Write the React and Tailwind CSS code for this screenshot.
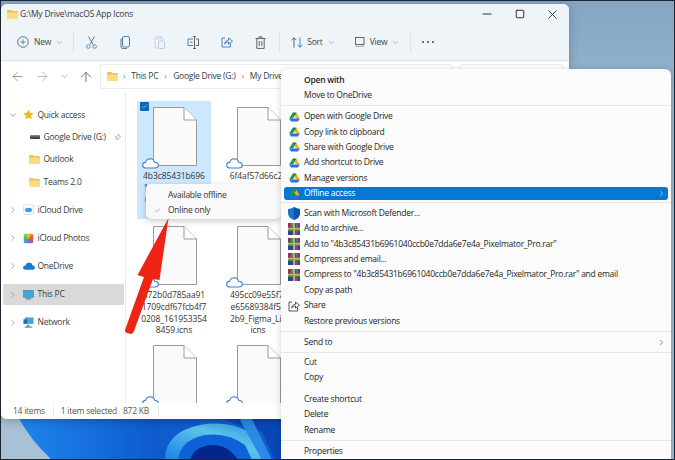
import { ArrowLeft, ArrowRight, ArrowUp, ChevronDown, ChevronRight, Check, Pin, Minus, Square, X } from "lucide-react";

const font = "font-['Open_Sans','Liberation_Sans',sans-serif]";

function Folder({ className = "w-[11px] h-[9px]" }) {
  return (
    <svg viewBox="0 0 22 18" className={className}>
      <path d="M0 2 Q0 0 2 0 H8 L10 2 H20 Q22 2 22 4 V16 Q22 18 20 18 H2 Q0 18 0 16 Z" fill="#f0c14f" />
      <path d="M0 5 H22 V16 Q22 18 20 18 H2 Q0 18 0 16 Z" fill="#fcdc7e" />
    </svg>
  );
}

function Drive() {
  return (
    <svg viewBox="0 0 24 21" className="w-[11px] h-[10px]">
      <path d="M8 1 H16 L8.5 14 H0.5 Z" fill="#0f9d58" />
      <path d="M16 1 L23.5 14 H15.5 L8 1 Z" fill="#f4b400" />
      <path d="M5 14 H23.5 L19.5 20.5 H4.5 L0.5 14 Z" fill="#2f6fde" />
      <path d="M8 1 H16 L12 7.5 Z" fill="#1c7a48" />
    </svg>
  );
}

function Rar() {
  return (
    <svg viewBox="0 0 12 12" className="w-[12px] h-[12px]">
      <rect x="0" y="0" width="12" height="4" fill="#9a2f5c" />
      <rect x="3" y="0" width="2" height="4" fill="#3f9a55" />
      <rect x="8" y="0" width="2" height="4" fill="#4a6fc0" />
      <rect x="0" y="4" width="12" height="4" fill="#3a8f4a" />
      <rect x="0" y="8" width="12" height="4" fill="#33409a" />
      <rect x="7" y="8" width="3" height="4" fill="#a03a7a" />
      <rect x="5" y="0" width="2" height="12" fill="#c9a75a" />
      <rect x="0" y="5" width="12" height="1.5" fill="#c9b56a" />
    </svg>
  );
}

function Shield() {
  return (
    <svg viewBox="0 0 12 13" className="w-[12px] h-[13px]">
      <path d="M6 0 Q9 2 12 2 V6 Q12 11 6 13 Q0 11 0 6 V2 Q3 2 6 0 Z" fill="#1f74c9" />
      <path d="M6 0 Q9 2 12 2 V6 Q12 11 6 13 Z" fill="#0d57a8" />
    </svg>
  );
}

function ShareIcon({ color = "#444" }) {
  return (
    <svg viewBox="0 0 12 12" className="w-[12px] h-[12px]" fill="none" stroke={color} strokeWidth="0.9">
      <path d="M4 2 H1 V11 H9.5 V7.5" />
      <path d="M3.5 8 Q4 4.5 7.5 4.2 V2 L11.5 5.2 L7.5 8.2 V6 Q5 6 3.5 8 Z" />
    </svg>
  );
}

function Doc() {
  return (
    <svg viewBox="0 0 44 59" className="w-[44px] h-[59px] block">
      <path d="M0.5 0.5 H31 L43.5 13 V58.5 H0.5 Z" fill="#fafafa" stroke="#9a9a9a" />
      <path d="M31 0.5 V13 H43.5" fill="#fff" stroke="#9a9a9a" />
    </svg>
  );
}

function Cloud() {
  return (
    <svg viewBox="0 0 17 11" className="w-[17px] h-[11px] block">
      <path d="M4 10 Q0.6 10 0.7 7 Q0.9 4.4 3.6 4.4 Q4.6 0.8 8.4 0.8 Q11.6 0.9 12.6 4.2 Q16.3 4.4 16.3 7.2 Q16.2 10 13 10 Z" fill="#fff" stroke="#3f7fce" strokeWidth="1.1" />
    </svg>
  );
}

function FileCell({ lines, selected, clipped }) {
  return (
    <div className={`relative h-[118px] w-[74px] ${selected ? "bg-[#cce8ff]" : ""}`}>
      {selected && (
        <div className="absolute left-[3px] top-[1px] w-[9px] h-[9px] rounded-[1px] bg-[#0b64bd] flex items-center justify-center">
          <Check size={7} color="#cfe6fb" strokeWidth={2} />
        </div>
      )}
      <div className="pl-[16px] pt-[6px]">
        <Doc />
      </div>
      <div className="absolute left-[5px] top-[57px]">
        <Cloud />
      </div>
      {!clipped && (
        <div className="mt-[4px] flex flex-col items-center text-[8.5px] tracking-[-0.1px] leading-[11.8px] text-[#333] whitespace-nowrap">
          {lines.map((l) => (
            <div key={l}>{l}</div>
          ))}
        </div>
      )}
    </div>
  );
}

function NavRow({ icon, label, indent, chevron, active, tall }) {
  return (
    <div className={tall ? "h-[28.2px] py-[4px] pl-[2px]" : "h-[22.4px] flex items-center pl-[2px]"}>
      <div className={`flex items-center h-full w-[121px] rounded-[2px] ${active ? "bg-[#d9d9d9]" : ""}`}>
        <div className="w-[19px] flex justify-center shrink-0">
          {chevron === "down" && <ChevronDown size={10} color="#666" strokeWidth={1.6} />}
          {chevron === "right" && <ChevronRight size={10} color="#888" strokeWidth={1.6} />}
        </div>
        {indent && <div className="w-[6px] shrink-0" />}
        <div className="w-[13px] flex justify-center shrink-0">{icon}</div>
        <span className="ml-[2.5px] text-[8.5px] tracking-[-0.25px] text-[#3a3a3a] whitespace-nowrap">{label}</span>
        {label.startsWith("Google") && <Pin size={7} color="#888" className="ml-[8px] rotate-45" />}
      </div>
    </div>
  );
}

function MenuRow({ label, icon, arrow, bold, active }) {
  return (
    <div className={`mx-[3px] flex items-center ${active ? "h-[12.4px] my-[1.5px] rounded-[3px] bg-[#0678d2] text-white" : "h-[15.4px] text-[#262626]"}`}>
      <div className="w-[20px] shrink-0 flex justify-center">{icon}</div>
      <span className={`text-[8.5px] tracking-[-0.25px] whitespace-nowrap ${bold ? "font-semibold" : ""}`}>{label}</span>
      {arrow && <ChevronRight size={9} color={active ? "#bcdcf5" : "#666"} className="ml-auto mr-[2px]" />}
    </div>
  );
}

function Sep({ y = "my-[2.4px]", faint }) {
  return <div className={`${y} h-px ${faint ? "bg-[#f6f6f6]" : "bg-[#e6e6e6]"}`} />;
}

function ToolBtn({ children, className = "" }) {
  return <div className={`flex items-center justify-center ${className}`}>{children}</div>;
}

function Divider() {
  return <div className="w-px h-[22px] bg-[#dde3e8]" />;
}

function SmallChevron({ className = "" }) {
  return <ChevronDown size={9} color="#888" strokeWidth={1.6} className={`-mx-[1px] ${className}`} />;
}

function Toolbar() {
  const blue = "#2f78b7";
  return (
    <div className="h-[37px] flex items-center pl-[16px] border-b border-[#dbe1e6] text-[8.5px] tracking-[-0.2px] text-[#444]">
      <svg viewBox="0 0 12 12" className="w-[12px] h-[12px]" fill="none" stroke="#555" strokeWidth="0.8">
        <circle cx="6" cy="6" r="5.3" />
        <path d="M6 3.3 V8.7 M3.3 6 H8.7" stroke={blue} />
      </svg>
      <span className="ml-[5px]">New</span>
      <SmallChevron className="ml-[4px]" />
      <div className="ml-[10px]"><Divider /></div>
      <ToolBtn className="w-[34px]">
        <svg viewBox="0 0 11 13" className="w-[11px] h-[13px]" fill="none" stroke="#555" strokeWidth="0.8">
          <path d="M2.5 0.5 L7 8.5 M8.5 0.5 L4 8.5" />
          <circle cx="2.4" cy="10.5" r="1.8" stroke={blue} />
          <circle cx="8.6" cy="10.5" r="1.8" stroke={blue} />
        </svg>
      </ToolBtn>
      <ToolBtn className="w-[34px]">
        <svg viewBox="0 0 10 13" className="w-[10px] h-[13px]" fill="none" stroke={blue} strokeWidth="0.9">
          <rect x="2.5" y="0.5" width="7" height="10.5" rx="1.5" />
          <path d="M1 2.5 V10.5 Q1 12.5 3 12.5 H7" stroke="#666" />
        </svg>
      </ToolBtn>
      <ToolBtn className="w-[34px]">
        <svg viewBox="0 0 11 13" className="w-[11px] h-[13px]" fill="none" stroke="#c3d0da" strokeWidth="0.9">
          <path d="M3 2 H1 V12 H4" />
          <path d="M7 2 H9 V4" />
          <rect x="3" y="0.7" width="4" height="2.2" />
          <rect x="4.5" y="5" width="6" height="7.5" rx="1" stroke="#a9cbe6" />
        </svg>
      </ToolBtn>
      <ToolBtn className="w-[34px]">
        <svg viewBox="0 0 12 13" className="w-[12px] h-[13px]" fill="none" stroke="#555" strokeWidth="0.9">
          <path d="M6 3 H1 V9.5 H6" stroke={blue} />
          <path d="M9 3 H11.5 V9.5 H9" />
          <path d="M7.5 0.5 V12.5 M6 0.5 H9 M6 12.5 H9" />
          <path d="M3 6.2 H5.5" stroke={blue} />
        </svg>
      </ToolBtn>
      <ToolBtn className="w-[33px]">
        <ShareIcon color={blue} />
      </ToolBtn>
      <ToolBtn className="w-[34px]">
        <svg viewBox="0 0 11 13" className="w-[11px] h-[13px]" fill="none" stroke="#555" strokeWidth="0.9">
          <path d="M0.5 2.5 H10.5 M4 2.5 V0.8 H7 V2.5 M1.8 2.5 V12.4 H9.2 V2.5 M4.2 5 V10 M6.8 5 V10" />
        </svg>
      </ToolBtn>
      <div className="ml-[2px]"><Divider /></div>
      <svg viewBox="0 0 12 11" className="ml-[11px] w-[12px] h-[11px]" fill="none" strokeWidth="0.9">
        <path d="M3 10.5 V0.8 M0.6 3.2 L3 0.8 L5.4 3.2" stroke="#555" />
        <path d="M9 0.5 V10.2 M6.6 7.8 L9 10.2 L11.4 7.8" stroke={blue} />
      </svg>
      <span className="ml-[4px]">Sort</span>
      <SmallChevron className="ml-[4px]" />
      <svg viewBox="0 0 10 10" className="ml-[20px] w-[10px] h-[10px]" fill="none" strokeWidth="0.9">
        <rect x="0.5" y="0.5" width="8.5" height="7" stroke="#555" />
        <path d="M0.5 9.3 H9" stroke="#999" />
      </svg>
      <span className="ml-[5px]">View</span>
      <SmallChevron className="ml-[4px]" />
      <div className="ml-[11px]"><Divider /></div>
      <div className="ml-[11px] flex gap-[3px]">
        <div className="w-[2px] h-[2px] rounded-full bg-[#444]" />
        <div className="w-[2px] h-[2px] rounded-full bg-[#444]" />
        <div className="w-[2px] h-[2px] rounded-full bg-[#444]" />
      </div>
    </div>
  );
}

function AddressRow() {
  return (
    <div className="h-[31px] flex items-center bg-white">
      <ArrowLeft size={15} color="#8a8a8a" strokeWidth={1.4} className="ml-[8.5px]" />
      <ArrowRight size={15} color="#b5b5b5" strokeWidth={1.4} className="ml-[10px]" />
      <SmallChevron className="ml-[10px]" />
      <ArrowUp size={16} color="#6a6a6a" strokeWidth={1.4} className="ml-[10.5px]" />
      <div className="ml-[6px] h-[25px] w-[353px] border border-[#ececec] rounded-[2px] flex items-center pl-[6px] text-[8.5px] tracking-[-0.25px] text-[#3a3a3a] whitespace-nowrap overflow-hidden">
        <Folder />
        <span className="ml-[5px] text-[#777]">›</span>
        <span className="ml-[6px]">This PC</span>
        <span className="ml-[6px] text-[#777]">›</span>
        <span className="ml-[6.5px]">Google Drive (G:)</span>
        <span className="ml-[6px] text-[#777]">›</span>
        <span className="ml-[6px]">My Drive</span>
      </div>
      <div className="ml-[6px] h-[25px] w-[104px] border border-[#ececec] rounded-[2px]" />
    </div>
  );
}

function Sidebar() {
  return (
    <div className="w-[125px] shrink-0 border-r border-[#ececec] pt-[11.8px]">
      <NavRow chevron="down" label="Quick access" icon={<svg viewBox="0 0 12 12" className="w-[11px] h-[11px]"><path d="M6 0.5 L7.7 4.2 L11.7 4.6 L8.7 7.3 L9.6 11.3 L6 9.2 L2.4 11.3 L3.3 7.3 L0.3 4.6 L4.3 4.2 Z" fill="#f5b81c" /></svg>} />
      <NavRow indent label="Google Drive (G:)" icon={<div className="w-[10px] h-[4px] rounded-[1px] bg-gradient-to-b from-[#8a8a8a] to-[#2e2e2e]" />} />
      <NavRow indent label="Outlook" icon={<Folder />} />
      <NavRow indent label="Teams 2.0" icon={<Folder />} />
      <div className="h-[2.5px]" />
      <NavRow tall chevron="right" label="iCloud Drive" icon={<div className="w-[11px] h-[11px] rounded-[2px] bg-[#f4f7fb] border border-[#dfe5ea] flex items-center justify-center"><div className="w-[7px] h-[4px] rounded-full bg-[#3d9be9]" /></div>} />
      <NavRow tall chevron="right" label="iCloud Photos" icon={<div className="w-[11px] h-[11px] rounded-[2px] border border-[#dfe5ea] bg-[conic-gradient(#f4c430,#e8503a,#b04fc4,#3d9be9,#4fbf67,#f4c430)]" />} />
      <NavRow tall chevron="right" label="OneDrive" icon={<svg viewBox="0 0 14 9" className="w-[12px] h-[8px]"><path d="M3 9 Q0 9 0 6.5 Q0 4 3 4 Q4 0.5 7.5 0.5 Q10.5 0.6 11 3.5 Q14 4 14 6.5 Q14 9 11.5 9 Z" fill="#1f78d1" /></svg>} />
      <NavRow tall active chevron="right" label="This PC" icon={<svg viewBox="0 0 12 11" className="w-[11px] h-[10px]"><rect x="0.5" y="0.5" width="11" height="7.5" fill="#3fa7dc" stroke="#1f7fb5" strokeWidth="0.6" /><rect x="3" y="9" width="6" height="1.5" fill="#6b8ea5" /></svg>} />
      <NavRow tall chevron="right" label="Network" icon={<svg viewBox="0 0 12 12" className="w-[11px] h-[11px]"><rect x="2" y="0.5" width="9.5" height="7" fill="#3fa7dc" /><rect x="0.5" y="2.5" width="4" height="5" fill="#1f6fa8" /><rect x="4" y="8.5" width="3" height="2" fill="#6b8ea5" /><rect x="2" y="10.5" width="8" height="1" fill="#1f6fa8" /></svg>} />
    </div>
  );
}

function FileGrid() {
  return (
    <div className="flex-1 overflow-hidden pl-[11px] pt-[9px] grid grid-cols-[74px_74px_74px] gap-x-[10px] gap-y-[1px] content-start">
      <FileCell selected lines={["4b3c85431b696", "1040ccb0e7dda", "6e7e4a_Pixelm"]} />
      <FileCell lines={["6f4af57d66c2c"]} />
      <div />
      <FileCell lines={["472b0d785aa91", "1709cdf67fcb4f7", "0208_161953354", "8459.icns"]} />
      <FileCell lines={["495cc09e55f7f", "e65689384f5a", "2b9_Figma_Lig", "icns"]} />
      <div />
      <FileCell clipped />
      <FileCell clipped />
    </div>
  );
}

function Explorer() {
  return (
    <div className="absolute left-px top-[4px] w-[568px] h-[415px] rounded-[6px] overflow-hidden flex flex-col bg-white shadow-[0_2px_10px_rgba(0,0,0,0.25)]">
      <div className="bg-[#eff4f9]">
        <div className="h-[20px] flex items-center pl-[6px] text-[8.5px] tracking-[-0.2px] text-[#3a3a3a]">
          <Folder />
          <span className="ml-[2px]">G:\My Drive\macOS App Icons</span>
          <div className="ml-auto flex items-center gap-[20.5px] pr-[9px]">
            <Minus size={14} color="#333" strokeWidth={1.7} />
            <Square size={10} color="#333" strokeWidth={2.4} />
            <X size={15} color="#333" strokeWidth={1.5} />
          </div>
        </div>
        <Toolbar />
      </div>
      <AddressRow />
      <div className="flex-1 flex min-h-0">
        <Sidebar />
        <FileGrid />
      </div>
      <div className="h-[16px] flex items-center pl-[12px] text-[8.5px] tracking-[-0.25px] text-[#555] bg-white whitespace-nowrap">
        <span>14 items</span>
        <div className="w-px h-[10px] bg-[#e6e6e6] ml-[8px]" />
        <span className="ml-[7px]">1 item selected</span>
        <span className="ml-[6px]">872 KB</span>
        <div className="w-px h-[10px] bg-[#e6e6e6] ml-[9px]" />
      </div>
    </div>
  );
}

function OfflinePopup() {
  return (
    <div className="absolute left-[146px] top-[184px] w-[135px] h-[35px] rounded-[5px] bg-[#f9f9f9] shadow-[0_2px_6px_rgba(0,0,0,0.22)] pt-[4px] text-[8.5px] tracking-[-0.25px] text-[#333]">
      <div className="h-[15px] flex items-center pl-[22px]">Available offline</div>
      <div className="h-[15px] flex items-center">
        <Check size={7} color="#777" className="ml-[8px]" />
        <span className="ml-[7px]">Online only</span>
      </div>
    </div>
  );
}

function ContextMenu() {
  return (
    <div className="absolute left-[281px] top-[69px] w-[390px] h-[391px] rounded-t-[6px] bg-[#fbfbfb] shadow-[0_1px_6px_rgba(0,0,0,0.2)] pt-[3.3px]">
      <MenuRow bold label="Open with" />
      <MenuRow label="Move to OneDrive" />
      <Sep />
      <MenuRow icon={<Drive />} label="Open with Google Drive" />
      <MenuRow icon={<Drive />} label="Copy link to clipboard" />
      <MenuRow icon={<Drive />} label="Share with Google Drive" />
      <MenuRow icon={<Drive />} label="Add shortcut to Drive" />
      <MenuRow icon={<Drive />} label="Manage versions" />
      <MenuRow active arrow icon={<Drive />} label="Offline access" />
      <Sep />
      <MenuRow icon={<Shield />} label="Scan with Microsoft Defender..." />
      <MenuRow icon={<Rar />} label="Add to archive..." />
      <MenuRow icon={<Rar />} label={'Add to "4b3c85431b6961040ccb0e7dda6e7e4a_Pixelmator_Pro.rar"'} />
      <MenuRow icon={<Rar />} label="Compress and email..." />
      <MenuRow icon={<Rar />} label={'Compress to "4b3c85431b6961040ccb0e7dda6e7e4a_Pixelmator_Pro.rar" and email'} />
      <MenuRow label="Copy as path" />
      <MenuRow icon={<ShareIcon />} label="Share" />
      <MenuRow label="Restore previous versions" />
      <Sep />
      <MenuRow arrow label="Send to" />
      <Sep y="my-[2px]" />
      <MenuRow label="Cut" />
      <MenuRow label="Copy" />
      <Sep y="my-[2.6px]" faint />
      <MenuRow label="Create shortcut" />
      <MenuRow label="Delete" />
      <MenuRow label="Rename" />
      <Sep />
      <MenuRow label="Properties" />
    </div>
  );
}

export default function App() {
  return (
    <div className={`relative w-[675px] h-[460px] overflow-hidden ${font}`}>
      {/* wallpaper */}
      <svg viewBox="0 0 675 460" className="absolute inset-0 w-full h-full">
        <defs>
          <linearGradient id="wall" x1="0" y1="0" x2="0" y2="1">
            <stop offset="0" stopColor="#84a6c4" />
            <stop offset="0.2" stopColor="#92b4cf" />
            <stop offset="1" stopColor="#9dbcd4" />
          </linearGradient>
          <linearGradient id="bloomLeft" x1="0" y1="0" x2="1" y2="0">
            <stop offset="0" stopColor="#1f86ec" />
            <stop offset="0.45" stopColor="#0f5fd2" />
            <stop offset="1" stopColor="#04339a" />
          </linearGradient>
          <linearGradient id="ribbon" x1="0" y1="1" x2="1" y2="0">
            <stop offset="0" stopColor="#1a7fe8" />
            <stop offset="0.6" stopColor="#5cc4ea" />
            <stop offset="1" stopColor="#2f8fe0" />
          </linearGradient>
        </defs>
        <rect width="675" height="460" fill="url(#wall)" />
        <rect y="415" width="290" height="45" fill="#a9c1d4" />
        <path d="M17 415 H290 V460 H52 Q30 440 17 415 Z" fill="url(#bloomLeft)" />
        <path d="M150 415 H281 V460 H168 Q155 440 150 415 Z" fill="#0f5ccf" />
        <path d="M165 460 Q165 432 200 425 Q226 420 250 432 L262 460 Z" fill="url(#ribbon)" />
        <path d="M178 460 Q180 440 205 435 Q228 432 245 445 L252 460 Z" fill="#0d62d8" />
        <path d="M190 460 Q194 447 210 445 Q228 444 238 460 Z" fill="#03268a" />
        <path d="M215 415 Q235 425 262 432 L275 460 H281 V415 Z" fill="#0a47b4" />
        <path d="M250 415 L272 460 H262 L240 420 Z" fill="#2a8ae6" />
      </svg>
      <Explorer />
      <OfflinePopup />
      <ContextMenu />
      {/* red arrow annotation */}
      <svg viewBox="0 0 675 460" className="absolute inset-0 w-full h-full pointer-events-none">
        <path d="M168.5 218 L137.5 275 L144 277 L125 330 Q124.5 332 127 333 L131 334 Q133 334 134 331 L153 279 L159.5 280 Z" fill="#ee2414" />
      </svg>
      {/* dark edge of the screenshot */}
      <div className="absolute inset-0 border border-[#1c2530] pointer-events-none" />
    </div>
  );
}
